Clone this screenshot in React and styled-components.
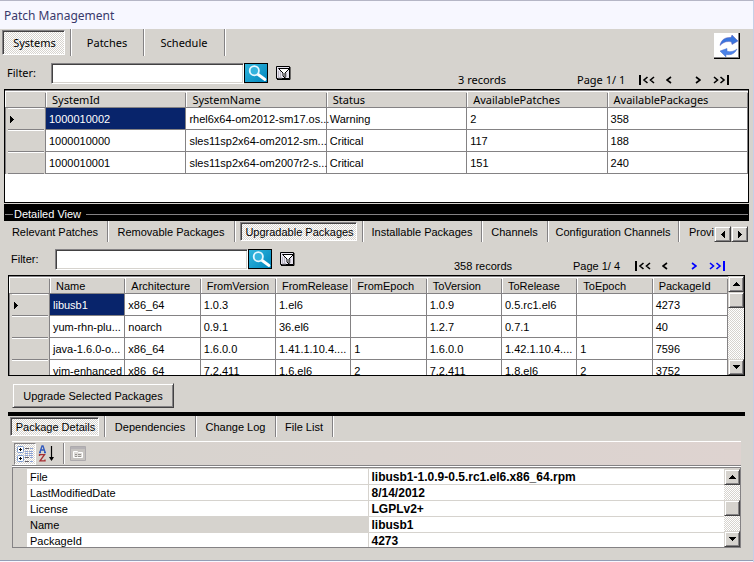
import React from "react";
import styled, { createGlobalStyle, css } from "styled-components";

const FACE = "#d6d3ce";
const SHADE = "#848284";
const NAVY = "#08246b";
const DITHER = `repeating-conic-gradient(#ffffff 0% 25%, ${FACE} 0% 50%) 0 0 / 2px 2px`;
const UI = `"Noto Sans", "Open Sans", sans-serif`;
const SANS = `"Liberation Sans", Arial, sans-serif`;

const GlobalStyle = createGlobalStyle`
  *, *::before, *::after { box-sizing: border-box; }
  body { margin: 0; background: ${FACE}; font: 11px/16px ${SANS}; color: #000; }
  button, input { font: inherit; color: inherit; margin: 0; padding: 0; border-radius: 0; }
  svg { display: block; }
`;

const raised = css`
  background: ${FACE};
  border: 1px solid;
  border-color: ${FACE} #424142 #424142 ${FACE};
  box-shadow: inset 1px 1px #fff, inset -1px -1px ${SHADE};
`;

const Window = styled.main`
  display: flex;
  flex-direction: column;
  min-height: 100vh;
  overflow: hidden;
  background: ${FACE};
  border-top: 1px solid #b5b6c6;
  border-right: 1px solid #c6cfe7;
`;

const TitleBar = styled.h1`
  margin: 0;
  padding: 0 4px;
  height: 28px;
  background: #f7f7ff;
  color: #39396b;
  font: 400 12px/29px ${UI};
`;

const TopRow = styled.div`
  display: flex;
  justify-content: space-between;
  align-items: flex-start;
  height: 34px;
  padding: 0 13px 0 2px;
  font-family: ${UI};
`;

const TabStrip = styled.div`
  display: flex;
  flex: 1;
  min-width: 0;
  height: ${(p) => p.$height}px;
  overflow: hidden;
`;

const TabSlot = styled.div`
  flex: none;
  width: ${(p) => p.$width}px;
  display: flex;
  border-right: 1px solid #fff;
  box-shadow: inset -1px 0 ${SHADE};
  padding: ${(p) => (p.$active ? "1px 6px 1px " + p.$lead + "px" : "0 2px 0 0")};
`;

const TabButton = styled.button`
  flex: 1;
  border: 0;
  background: none;
  white-space: nowrap;
  text-align: center;
  ${(p) =>
    p.$active &&
    css`
      background: ${DITHER};
      border: 1px solid;
      border-color: ${SHADE} #fff #fff ${SHADE};
      box-shadow: inset 1px 1px #424142;
      padding: 1px 0 0 2px;
    `}
`;

const RefreshButton = styled.button`
  width: 26px;
  height: 26px;
  margin-top: 4px;
  background: #fff;
  border: solid #000;
  border-width: 0 1px 1px 0;
  box-shadow: inset -1px -1px ${SHADE};
`;

const FilterRow = styled.form`
  display: flex;
  align-items: flex-start;
  height: 26px;
  padding: 0 ${(p) => p.$right}px 0 ${(p) => p.$left}px;
  font-family: ${(p) => (p.$ui ? UI : SANS)};
`;

const FilterLabel = styled.label`
  flex: none;
  width: 44px;
  line-height: 20px;
`;

const FilterInput = styled.input`
  flex: none;
  width: 193px;
  height: 21px;
  background: #fff;
  border: 1px solid;
  border-color: ${SHADE} #fff #fff ${SHADE};
  box-shadow: inset 1px 1px #424142, inset -1px -1px ${FACE};
  padding: 0 4px;
  outline: 0;
`;

const SearchButton = styled.button`
  width: 24px;
  height: 20px;
  border: 1px solid #000;
  background: linear-gradient(135deg, #31b6de, #0086bd);
  overflow: hidden;
`;

const FunnelButton = styled.button`
  width: 16px;
  height: 16px;
  margin: 2px 0 0 7px;
  border: 0;
  background: none;
`;

const Paging = styled.div`
  display: grid;
  grid-template-columns: 119px 62px 27px 29px 18px 16px;
  align-self: flex-end;
  align-items: center;
  height: 18px;
  margin-left: auto;
  white-space: nowrap;
`;

const PageButton = styled.button`
  border: 0;
  background: none;
  color: ${(p) => (p.$link ? "#0000ff" : "#000")};
`;

const GridBox = styled.div`
  display: flex;
  height: ${(p) => p.$height}px;
  margin: 0 ${(p) => p.$side}px;
  border: 1px solid #000;
  background: #fff;
  overflow: hidden;
`;

const GridView = styled.div`
  flex: 1;
  min-width: 0;
  overflow: hidden;
`;

const DataTable = styled.table`
  width: 100%;
  table-layout: fixed;
  border-collapse: separate;
  border-spacing: 0;
`;

const MarkerCol = styled.col`
  width: 41px;
`;

const HeadCell = styled.th`
  height: 18px;
  padding: 2px 0 0 6px;
  text-align: left;
  font-weight: normal;
  font-family: ${(p) => (p.$ui ? UI : SANS)};
  line-height: 14px;
  white-space: nowrap;
  overflow: hidden;
  border-top: 1px solid ${SHADE};
  border-bottom: 1px solid ${SHADE};
  background:
    linear-gradient(${SHADE}, ${SHADE}) right 2px / 1px 100% no-repeat,
    linear-gradient(#fff, #fff) left 1px / 1px 100% no-repeat,
    linear-gradient(#fff, #fff) left top / 100% 1px no-repeat,
    ${FACE};
`;

const MarkerCell = styled.th`
  height: 22px;
  padding: 0 0 0 5px;
  border-right: 1px solid ${SHADE};
  background:
    linear-gradient(#fff, #fff) 3px top / 36px 1px no-repeat,
    linear-gradient(${SHADE}, ${SHADE}) 3px bottom / 36px 1px no-repeat,
    linear-gradient(${SHADE}, ${SHADE}) left top / 1px 100% no-repeat,
    ${FACE};
`;

const Cell = styled.td`
  height: 22px;
  padding: 0 0 0 3px;
  border-right: 1px solid ${SHADE};
  border-bottom: 1px solid ${SHADE};
  white-space: nowrap;
  background: ${(p) => (p.$selected ? NAVY : "#fff")};
  color: ${(p) => (p.$selected ? "#fff" : "#000")};
`;

const GroupBand = styled.div`
  display: flex;
  align-items: center;
  height: 17px;
  margin: 1px 4px 0;
  padding: 3px 1px 0;
  background: #000;
`;

const GroupRule = styled.span`
  flex: ${(p) => (p.$lead ? "0 0 8px" : "1")};
  height: 1px;
  background: ${SHADE};
`;

const GroupTitle = styled.h2`
  margin: 0 5px 0 1px;
  font: 11px/14px ${SANS};
  color: #fff;
`;

const DetailTabs = styled.div`
  display: flex;
  height: 28px;
  padding: 0 5px 0 4px;
`;

const TabScroller = styled.div`
  display: flex;
  align-items: flex-end;
  height: 21px;
`;

const ArrowButton = styled.button`
  ${raised}
  flex: none;
  display: grid;
  place-items: center;
  width: ${(p) => (p.$wide ? 17 : 16)}px;
  height: 16px;
`;

const Track = styled.div`
  flex: none;
  display: flex;
  flex-direction: column;
  width: 16px;
  background: ${DITHER};
`;

const TrackGap = styled.div`
  flex: ${(p) => p.$grow};
`;

const Thumb = styled.div`
  ${raised}
  flex: none;
  height: 16px;
`;

const ActionButton = styled.button`
  ${raised}
  align-self: flex-start;
  width: 162px;
  height: 25px;
  margin: 7px 0 4px 12px;
`;

const Splitter = styled.div`
  height: 4px;
  margin: 0 8px;
  background: #000;
`;

const PackageTabs = styled.div`
  display: flex;
  height: 25px;
  padding: 0 12px 0 10px;
`;

const Toolbar = styled.div`
  display: flex;
  align-items: center;
  height: 25px;
  margin: 0 12px 1px;
  padding-left: 2px;
  border-top: 1px solid #fff;
  border-bottom: 1px solid ${SHADE};
  box-shadow: 0 1px #fff;
  background: linear-gradient(90deg, ${FACE}, #ded3d0);
`;

const ToolButton = styled.button`
  flex: none;
  display: grid;
  place-items: center;
  width: 22px;
  height: 22px;
  border: 1px solid transparent;
  background: none;
  ${(p) =>
    p.$pressed &&
    css`
      background: ${DITHER};
      border-color: ${SHADE} #fff #fff ${SHADE};
    `}
`;

const ToolDivider = styled.span`
  width: 2px;
  height: 21px;
  margin: 0 2px 0 5px;
  border-left: 1px solid ${SHADE};
  border-right: 1px solid #fff;
`;

const PropertyBox = styled.div`
  display: flex;
  height: 81px;
  margin: 0 12px 12px;
  padding-top: 1px;
  border: 1px solid ${SHADE};
  overflow: hidden;
`;

const PropertyTable = styled.table`
  width: 100%;
  table-layout: fixed;
  border-collapse: separate;
  border-spacing: 0;
  border-left: 14px solid ${FACE};
`;

const NameCol = styled.col`
  width: 49%;
`;

const PropertyName = styled.th`
  height: 16px;
  padding: 0 3px;
  text-align: left;
  font-weight: normal;
  line-height: 14px;
  background: ${(p) => (p.$selected ? FACE : "#fff")};
  border-right: 1px solid ${FACE};
  border-bottom: 1px solid ${FACE};
`;

const PropertyValue = styled.td`
  padding: 0 3px;
  font-size: 12px;
  font-weight: bold;
  line-height: 14px;
  background: #fff;
  border-bottom: 1px solid ${FACE};
`;

const BottomEdge = styled.div`
  margin-top: auto;
  height: 2px;
  background: #f7f7ff;
  border-top: 1px solid #949eb5;
`;

const ARROWS = {
  up: { w: 7, h: 4, d: "M3 0h1v1h1v1h1v1h1v1H0V3h1V2h1V1h1z" },
  down: { w: 7, h: 4, d: "M0 0h7v1H6v1H5v1H4v1H3V3H2V2H1V1H0z" },
  left: { w: 4, h: 7, d: "M4 0v7H3V6H2V5H1V4H0V3h1V2h1V1h1V0z" },
  right: { w: 4, h: 7, d: "M0 0v7h1V6h1V5h1V4h1V3H3V2H2V1H1V0z" },
};

function Arrow({ dir }) {
  const a = ARROWS[dir];
  return (
    <svg width={a.w} height={a.h} viewBox={`0 0 ${a.w} ${a.h}`} aria-hidden="true">
      <path d={a.d} />
    </svg>
  );
}

function SearchIcon() {
  return (
    <svg width="22" height="18" viewBox="0 0 22 18" fill="none" aria-hidden="true">
      <path d="M12.500 10l7.500 5.500" stroke="#fff" strokeWidth="2.800" strokeLinecap="round" />
      <circle cx="9.300" cy="6.700" r="4.600" fill="#35b3dd" stroke="#e7f7ff" strokeWidth="1.800" />
    </svg>
  );
}

function FunnelIcon() {
  return (
    <svg width="16" height="16" viewBox="0 0 16 16" fill="none" aria-hidden="true">
      <path d="M1.500 1.500h13v12h-13z" fill="#e7e3ef" stroke="#000" />
      <path d="M2 14.500h13V2" stroke="#000" />
      <path d="M3 7h1m1 0h1M3 9h1m1 0h1m-3 2h1m1 0h1m-3 2h4m3-4h2m-2 2h2" stroke="#8c8a94" />
      <path d="M3.500 3.500h11L10 8v5l-2-2V8z" fill="#fff" stroke="#000" />
    </svg>
  );
}

function RefreshIcon() {
  return (
    <svg width="25" height="25" viewBox="0 0 25 25" aria-hidden="true">
      <path d="M6 12.500C7 7 11 4 17 4.500L18 2l6 6-6 3.500-.5-2.500C13 7.800 9.500 9 6 12.500z" fill="#3975de" stroke="#5a59b5" strokeWidth=".5" />
      <path d="M23 16c-2 4.500-6 6.500-11 5.500L12 24l-6-6 7-2.500v2.800c4 .9 7 0 10-2.300z" fill="#4a82e7" stroke="#4a6dce" strokeWidth=".5" />
    </svg>
  );
}

function CategoryIcon() {
  return (
    <svg width="18" height="18" viewBox="0 0 18 18" fill="none" aria-hidden="true">
      <rect x="1.500" y="1.500" width="6" height="6" rx="1" fill="#fff" stroke="#7b9ace" />
      <rect x="1.500" y="10.500" width="6" height="6" rx="1" fill="#fff" stroke="#7b9ace" />
      <path d="M3 4.500h3M4.500 3v3M3 13.500h3M4.500 12v3" stroke="#000" />
      <path d="M9 3.500h4M9 12.500h4M9 16.500h4" stroke="#63616b" />
      <path d="M9 6.500h3m1 0h4M9 8.500h3m1 0h4M9 10.500h3m1 0h4M14 3.500h3M14 12.500h3M14 16.500h3" stroke="#8ca2d6" />
    </svg>
  );
}

function SortIcon() {
  return (
    <svg width="18" height="18" viewBox="0 0 18 18" fill="none" aria-hidden="true">
      <path d="M1 7.500h2M6 7.500h2M2 7l2-6h1l2 6M3 5h3" stroke="#3159bd" strokeWidth="1.300" />
      <path d="M1.500 11v-1.300h5L2 15.800h5V14.500" stroke="#a52c31" strokeWidth="1.300" />
      <path d="M13.500 1v14" stroke="#000" strokeWidth="1.200" />
      <path d="M11 12h5l-2.500 4z" fill="#000" />
    </svg>
  );
}

function PagesIcon() {
  return (
    <svg width="16" height="15" viewBox="0 0 16 15" fill="none" aria-hidden="true">
      <path d="M.5.5h15v14H.5z" fill="#c6c3c0" stroke="#adaaad" />
      <path d="M1 2h14" stroke="#b5b2b5" strokeWidth="2" />
      <path d="M3.500 5.500h4l1 1h4v5h-9z" fill="#dedbd8" stroke="#fff" />
      <path d="M5 8.500h2m1 0h3M5 10.500h2m1 0h3" stroke="#94928f" />
    </svg>
  );
}

const PAGE_ICONS = {
  first: { w: 16, bar: "M1 0v10", chev: "M8.500 2L5 5l3.500 3M15 2l-3.500 3L15 8" },
  prev: { w: 6, chev: "M5 2L1 5l4 3" },
  next: { w: 6, chev: "M1 2l4 3-4 3" },
  last: { w: 16, bar: "M15 0v10", chev: "M1 2l3.500 3L1 8M7.500 2L11 5 7.500 8" },
};

function PageIcon({ kind }) {
  const icon = PAGE_ICONS[kind];
  return (
    <svg width={icon.w} height="10" viewBox={`0 0 ${icon.w} 10`} fill="none" stroke="currentColor" aria-hidden="true">
      {icon.bar && <path d={icon.bar} strokeWidth="2" />}
      <path d={icon.chev} strokeWidth="1.600" />
    </svg>
  );
}

function Tabs({ items, active, height, lead = 0, label }) {
  return (
    <TabStrip role="tablist" aria-label={label} $height={height}>
      {items.map(([text, width]) => (
        <TabSlot key={text} $width={width} $active={text === active} $lead={lead}>
          <TabButton type="button" role="tab" aria-selected={text === active} $active={text === active}>
            {text}
          </TabButton>
        </TabSlot>
      ))}
    </TabStrip>
  );
}

function Filter({ id, left, right, ui, records, page, more }) {
  return (
    <FilterRow $left={left} $right={right} $ui={ui} onSubmit={(e) => e.preventDefault()}>
      <FilterLabel htmlFor={id}>Filter:</FilterLabel>
      <FilterInput id={id} type="text" />
      <SearchButton type="submit" aria-label="Search"><SearchIcon /></SearchButton>
      <FunnelButton type="button" aria-label="Filter options"><FunnelIcon /></FunnelButton>
      <Paging>
        <span>{records}</span>
        <span>{page}</span>
        <PageButton type="button" aria-label="First page"><PageIcon kind="first" /></PageButton>
        <PageButton type="button" aria-label="Previous page"><PageIcon kind="prev" /></PageButton>
        <PageButton type="button" aria-label="Next page" $link={more}><PageIcon kind="next" /></PageButton>
        <PageButton type="button" aria-label="Last page" $link={more}><PageIcon kind="last" /></PageButton>
      </Paging>
    </FilterRow>
  );
}

function ScrollBar({ before, after }) {
  return (
    <Track>
      <ArrowButton type="button" aria-label="Scroll up"><Arrow dir="up" /></ArrowButton>
      <TrackGap $grow={before} />
      <Thumb />
      <TrackGap $grow={after} />
      <ArrowButton type="button" aria-label="Scroll down"><Arrow dir="down" /></ArrowButton>
    </Track>
  );
}

function Grid({ columns, rows, ui }) {
  return (
    <GridView>
      <DataTable>
        <colgroup>
          <MarkerCol />
          {columns.map((c) => <col key={c} />)}
        </colgroup>
        <thead>
          <tr>
            <HeadCell $ui={ui} />
            {columns.map((c) => <HeadCell key={c} scope="col" $ui={ui}>{c}</HeadCell>)}
          </tr>
        </thead>
        <tbody>
          {rows.map((row, r) => (
            <tr key={row[0]}>
              <MarkerCell>{r === 0 && <Arrow dir="right" />}</MarkerCell>
              {row.map((value, c) => (
                <Cell key={columns[c]} $selected={r === 0 && c === 0}>{value}</Cell>
              ))}
            </tr>
          ))}
        </tbody>
      </DataTable>
    </GridView>
  );
}

const SYSTEM_COLUMNS = ["SystemId", "SystemName", "Status", "AvailablePatches", "AvailablePackages"];
const SYSTEMS = [
  ["1000010002", "rhel6x64-om2012-sm17.os...", "Warning", "2", "358"],
  ["1000010000", "sles11sp2x64-om2012-sm...", "Critical", "117", "188"],
  ["1000010001", "sles11sp2x64-om2007r2-s...", "Critical", "151", "240"],
];

const PACKAGE_COLUMNS = [
  "Name", "Architecture", "FromVersion", "FromRelease", "FromEpoch",
  "ToVersion", "ToRelease", "ToEpoch", "PackageId",
];
const PACKAGES = [
  ["libusb1", "x86_64", "1.0.3", "1.el6", "", "1.0.9", "0.5.rc1.el6", "", "4273"],
  ["yum-rhn-plu...", "noarch", "0.9.1", "36.el6", "", "1.2.7", "0.7.1", "", "40"],
  ["java-1.6.0-o...", "x86_64", "1.6.0.0", "1.41.1.10.4....", "1", "1.6.0.0", "1.42.1.10.4....", "1", "7596"],
  ["vim-enhanced", "x86_64", "7.2.411", "1.6.el6", "2", "7.2.411", "1.8.el6", "2", "3752"],
];

const PROPERTIES = [
  ["File", "libusb1-1.0.9-0.5.rc1.el6.x86_64.rpm"],
  ["LastModifiedDate", "8/14/2012"],
  ["License", "LGPLv2+"],
  ["Name", "libusb1"],
  ["PackageId", "4273"],
];

export default function App() {
  return (
    <Window>
      <GlobalStyle />
      <TitleBar>Patch Management</TitleBar>
      <TopRow>
        <Tabs
          label="Management views"
          height={27}
          active="Systems"
          items={[["Systems", 70], ["Patches", 73], ["Schedule", 81]]}
        />
        <RefreshButton type="button" aria-label="Refresh"><RefreshIcon /></RefreshButton>
      </TopRow>
      <Filter id="system-filter" ui left={7} right={24} records="3 records" page="Page 1/ 1" />
      <GridBox $height={114} $side={4}>
        <Grid ui columns={SYSTEM_COLUMNS} rows={SYSTEMS} />
      </GridBox>

      <GroupBand>
        <GroupRule $lead />
        <GroupTitle>Detailed View</GroupTitle>
        <GroupRule />
      </GroupBand>
      <DetailTabs>
        <Tabs
          label="Detail views"
          height={21}
          active="Upgradable Packages"
          lead={4}
          items={[
            ["Relevant Patches", 105],
            ["Removable Packages", 127],
            ["Upgradable Packages", 128],
            ["Installable Packages", 119],
            ["Channels", 66],
            ["Configuration Channels", 131],
            ["Provi", 46],
          ]}
        />
        <TabScroller>
          <ArrowButton $wide type="button" aria-label="Scroll tabs left"><Arrow dir="left" /></ArrowButton>
          <ArrowButton $wide type="button" aria-label="Scroll tabs right"><Arrow dir="right" /></ArrowButton>
        </TabScroller>
      </DetailTabs>
      <Filter id="package-filter" left={11} right={28} records="358 records" page="Page 1/ 4" more />
      <GridBox $height={101} $side={8}>
        <Grid columns={PACKAGE_COLUMNS} rows={PACKAGES} />
        <ScrollBar before={0} after={1} />
      </GridBox>
      <ActionButton type="button">Upgrade Selected Packages</ActionButton>

      <Splitter />
      <PackageTabs>
        <Tabs
          label="Package views"
          height={21}
          active="Package Details"
          items={[["Package Details", 96], ["Dependencies", 91], ["Change Log", 80], ["File List", 57]]}
        />
      </PackageTabs>
      <Toolbar>
        <ToolButton $pressed type="button" aria-label="Categorized"><CategoryIcon /></ToolButton>
        <ToolButton type="button" aria-label="Alphabetical"><SortIcon /></ToolButton>
        <ToolDivider />
        <ToolButton type="button" aria-label="Property pages"><PagesIcon /></ToolButton>
      </Toolbar>
      <PropertyBox>
        <PropertyTable>
          <colgroup>
            <NameCol />
            <col />
          </colgroup>
          <tbody>
            {PROPERTIES.map(([name, value]) => (
              <tr key={name}>
                <PropertyName scope="row" $selected={name === "Name"}>{name}</PropertyName>
                <PropertyValue>{value}</PropertyValue>
              </tr>
            ))}
          </tbody>
        </PropertyTable>
        <ScrollBar before={1} after={1} />
      </PropertyBox>
      <BottomEdge />
    </Window>
  );
}
